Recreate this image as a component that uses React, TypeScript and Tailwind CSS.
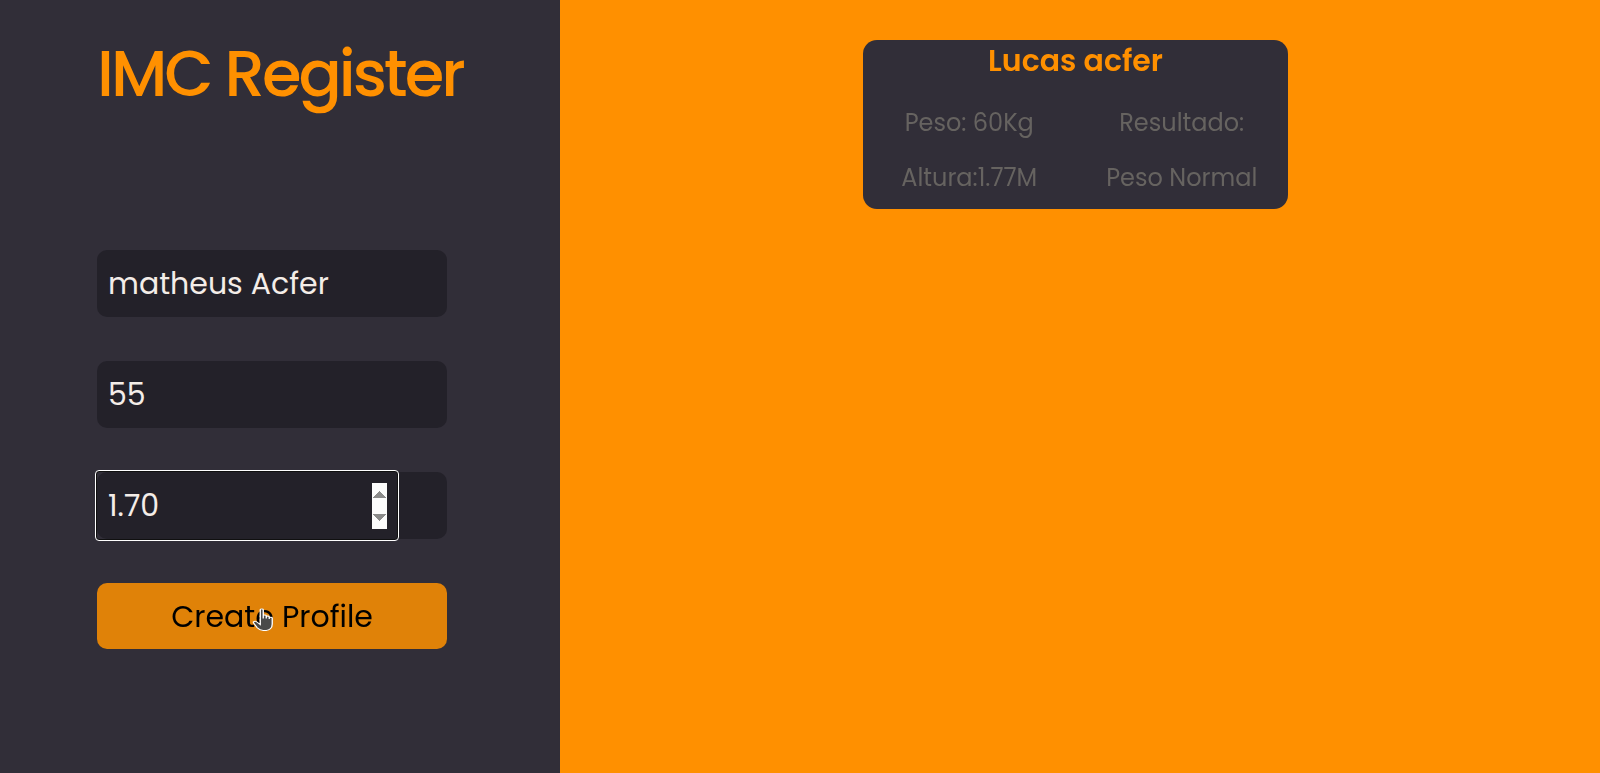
import React from "react";

const font = { fontFamily: "Poppins, Lato, 'Noto Sans', sans-serif" };

function Field({ value, type = "text", focused = false }: { value: string; type?: string; focused?: boolean }) {
  return (
    <div className="w-[350px] h-[67px] bg-[#232129] rounded-[10px] flex items-stretch">
      <input
        type={type}
        defaultValue={value}
        step={type === "number" ? "0.01" : undefined}
        autoFocus={focused}
        className={
          "h-full bg-transparent pl-[11px] text-[30px] text-[#f4ede8] " +
          (focused
            ? "w-[300px] pr-[10px] rounded-[2px] outline-1 outline-white outline-offset-[1px] shadow-[0_0_0_1px_#101010]"
            : "w-full pr-2 rounded-[10px] outline-none")
        }
        style={font}
      />
    </div>
  );
}

export default function App() {
  return (
    <div className="flex min-h-[773px] w-full" style={font}>
      <aside className="w-[560px] shrink-0 bg-[#312e38] pl-[97px] pt-[30px]">
        <h1 className="text-[64px] leading-[88px] font-medium tracking-[-3px] text-[#ff9000]">
          IMC Register
        </h1>

        <form className="mt-[132px] flex flex-col gap-[44px]">
          <Field value="matheus Acfer" />
          <Field value="55" />
          <Field value="1.70" type="number" focused />
          <button
            type="button"
            className="relative w-[350px] h-[66px] bg-[#e08208] rounded-[10px] text-[30px] text-black"
          >
            Create Profile
            <svg
              className="absolute left-[155px] top-[25px]"
              width="21"
              height="23"
              viewBox="0.5 0.3 14 21.2"
              preserveAspectRatio="none"
            >
              <path
                d="M6 2 C6 0.8 8 0.8 8 2 V10 V7.5 C8 6.5 10 6.5 10 7.5 V10 V8.5 C10 7.5 12 7.5 12 8.5 V10.5 V9.5 C12 8.5 14 8.5 14 9.5 V15 C14 19 12 21 10 21 H8 C6 21 5 20 4 18.5 L1.5 14 C1 13 2.5 12 3.5 13 L6 15.5 Z"
                fill="#4a4a4a"
                stroke="#ffffff"
                strokeWidth="0.9"
              />
            </svg>
          </button>
        </form>
      </aside>

      <main className="flex-1 bg-[#ff9000] flex justify-center pt-[40px] pr-[9px]">
        <div className="w-[425px] h-[169px] bg-[#312e38] rounded-[14px] flex flex-col items-center">
          <h2 className="text-[30px] leading-[40px] font-semibold text-[#ff9000] mt-[1px]">Lucas acfer</h2>
          <div className="grid grid-cols-2 w-full text-[24px] text-[#666360] text-center mt-[24px] gap-y-[20px] leading-[35px]">
            <span>Peso: 60Kg</span>
            <span>Resultado:</span>
            <span>Altura:1.77M</span>
            <span>Peso Normal</span>
          </div>
        </div>
      </main>
    </div>
  );
}
